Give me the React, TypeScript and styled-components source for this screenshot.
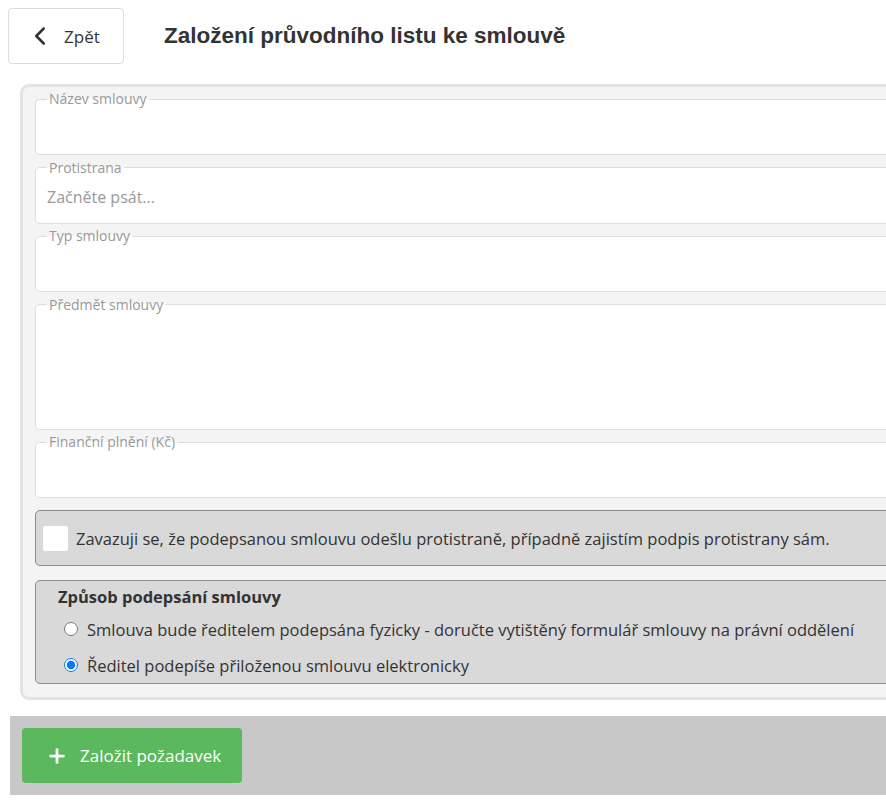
import React from "react"
import styled, { createGlobalStyle } from "styled-components"
import { ChevronLeft, Plus } from "lucide-react"

const GlobalStyle = createGlobalStyle`
	html, body {
		margin: 0;
		padding: 0;
		overflow: hidden;
		background: #fff;
	}
	body {
		font-family: "Open Sans", "Noto Sans", sans-serif;
		color: #333;
	}
`

const Page = styled.div`
	width: 886px;
	overflow: hidden;
	padding-top: 8px;
`

const Header = styled.div`
	display: flex;
	align-items: center;
	gap: 40px;
	padding-left: 8px;
`

const BackButton = styled.button`
	display: flex;
	align-items: center;
	gap: 9px;
	width: 116px;
	height: 56px;
	padding: 0 0 0 16px;
	background: #fff;
	border: 1px solid #dcdcdc;
	border-radius: 4px;
	font-family: "Open Sans", sans-serif;
	font-size: 17px;
	color: #333;
	cursor: pointer;
`

const Title = styled.h1`
	margin: 0;
	font-family: "Liberation Sans", Arial, sans-serif;
	font-size: 22.5px;
	font-weight: 700;
	color: #333;
`

const Panel = styled.div`
	box-sizing: border-box;
	width: 900px;
	margin: 20px 0 0 20px;
	padding: 4px 0 13px 12px;
	background: #f4f4f4;
	border: 3px solid #e3e3e3;
	border-radius: 9px;
`

const Field = styled.fieldset`
	box-sizing: border-box;
	margin: 0 0 4.5px 0;
	padding: 0 10px 5px 10px;
	background: #fff;
	border: 1px solid #ddd;
	border-radius: 4px;
	min-width: 0;
`

const Legend = styled.legend`
	padding: 0 2px;
	margin-left: 1px;
	font-size: 14px;
	line-height: 16px;
	color: #999;
`

const Input = styled.input`
	display: block;
	box-sizing: border-box;
	width: 100%;
	height: 42px;
	padding: 0 1px;
	border: none;
	outline: none;
	background: transparent;
	font-family: "Open Sans", sans-serif;
	font-size: 16px;
	color: #333;

	&::placeholder {
		color: #999;
	}
`

const TextArea = styled.textarea`
	display: block;
	box-sizing: border-box;
	width: 100%;
	height: 111px;
	padding: 2px;
	border: none;
	outline: none;
	resize: none;
	background: transparent;
	font-family: "Open Sans", sans-serif;
	font-size: 16px;
`

const GrayBox = styled.div<{ $top: number }>`
	box-sizing: border-box;
	margin-top: ${p => p.$top}px;
	background: #d9d9d9;
	border: 1px solid #8a8a8a;
	border-radius: 5px;
`

const CheckRow = styled.label`
	display: flex;
	align-items: center;
	gap: 8px;
	height: 54px;
	padding-left: 7px;
	font-size: 16.5px;
	color: #333;
`

const CheckBox = styled.span`
	display: block;
	width: 25px;
	height: 25px;
	background: #fff;
	border-radius: 2px;
`

const Group = styled.div`
	padding: 4px 0 0 0;
`

const GroupTitle = styled.div`
	margin-bottom: 2px;
	padding-left: 22px;
	font-size: 16.5px;
	font-weight: 700;
	line-height: 24px;
	color: #333;
`

const RadioRow = styled.label`
	display: flex;
	align-items: center;
	gap: 9px;
	height: 36px;
	padding-left: 28px;
	font-size: 16.5px;
	color: #333;
`

const Radio = styled.input`
	width: 14px;
	height: 14px;
	margin: 0;
	accent-color: #0a75ff;
`

const Footer = styled.div`
	width: 900px;
	margin: 16px 0 0 10px;
	padding: 12px;
	background: #c8c8c8;
`

const SubmitButton = styled.button`
	display: flex;
	align-items: center;
	gap: 12px;
	width: 220px;
	height: 55px;
	padding: 0 0 0 24px;
	background: #5cb85c;
	border: none;
	border-radius: 4px;
	font-family: "Open Sans", sans-serif;
	font-size: 17px;
	color: #fff;
	cursor: pointer;
`

export default function App() {
	return (
		<Page>
			<GlobalStyle />
			<Header>
				<BackButton>
					<ChevronLeft size={30} strokeWidth={2} color="#333" />
					Zpět
				</BackButton>
				<Title>Založení průvodního listu ke smlouvě</Title>
			</Header>
			<Panel>
				<Field>
					<Legend>Název smlouvy</Legend>
					<Input type="text" />
				</Field>
				<Field>
					<Legend>Protistrana</Legend>
					<Input type="text" placeholder="Začněte psát..." />
				</Field>
				<Field>
					<Legend>Typ smlouvy</Legend>
					<Input type="text" />
				</Field>
				<Field>
					<Legend>Předmět smlouvy</Legend>
					<TextArea />
				</Field>
				<Field>
					<Legend>Finanční plnění (Kč)</Legend>
					<Input type="text" />
				</Field>
				<GrayBox $top={12}>
					<CheckRow>
						<CheckBox />
						Zavazuji se, že podepsanou smlouvu odešlu protistraně, případně zajistím podpis protistrany sám.
					</CheckRow>
				</GrayBox>
				<GrayBox $top={14}>
					<Group>
						<GroupTitle>Způsob podepsání smlouvy</GroupTitle>
						<RadioRow>
							<Radio type="radio" name="sign" />
							Smlouva bude ředitelem podepsána fyzicky - doručte vytištěný formulář smlouvy na právní oddělení
						</RadioRow>
						<RadioRow>
							<Radio type="radio" name="sign" defaultChecked />
							Ředitel podepíše přiloženou smlouvu elektronicky
						</RadioRow>
					</Group>
				</GrayBox>
			</Panel>
			<Footer>
				<SubmitButton>
					<Plus size={22} strokeWidth={3} color="#fff" />
					Založit požadavek
				</SubmitButton>
			</Footer>
		</Page>
	)
}
